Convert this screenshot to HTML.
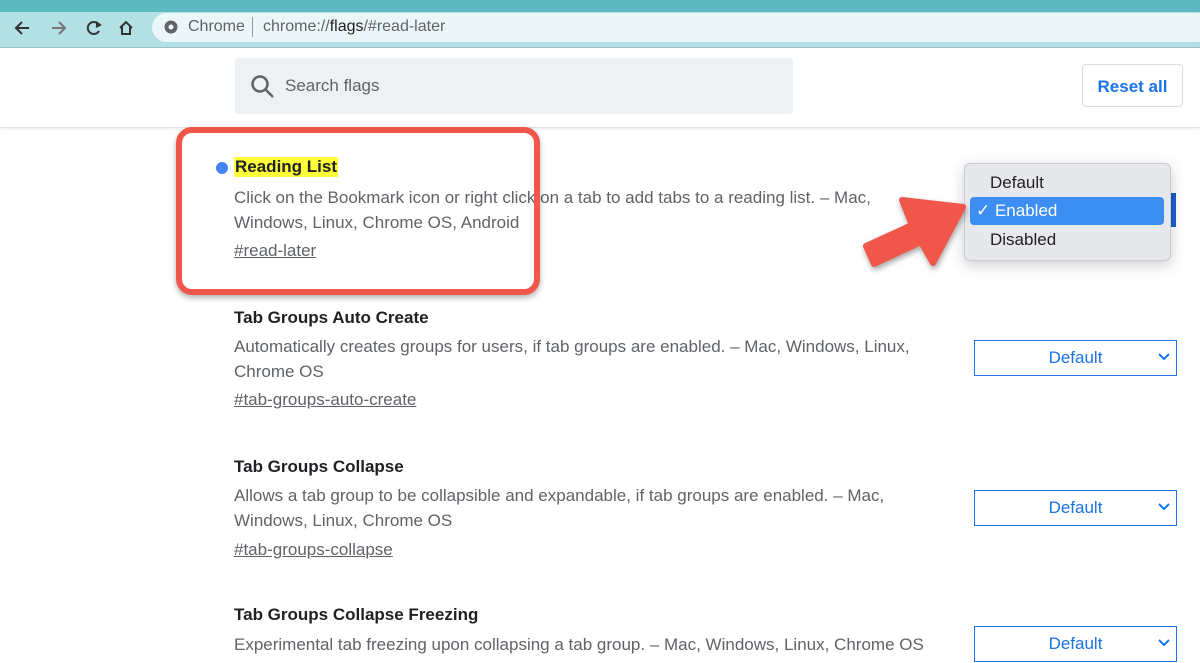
<!DOCTYPE html>
<html><head><style>
body{margin:0;width:1200px;height:663px;overflow:hidden;background:#fff;font-family:"Liberation Sans",Arial,sans-serif;position:relative;color:#202124}
.abs{position:absolute}
.top{left:0;top:0;width:1200px;height:12px;background:#5cb9c1}
.tb{left:0;top:12px;width:1200px;height:35px;background:#b2e0e3;border-bottom:1px solid #9cc4c7}
.pill{left:152px;top:13px;width:1060px;height:29px;border-radius:15px;background:#eaf6f7}
.hdr{left:0;top:48px;width:1200px;height:79px;border-bottom:1px solid #e0e0e0;box-shadow:0 1px 3px rgba(0,0,0,.08)}
.search{left:235px;top:58px;width:558px;height:56px;background:#eef1f3;border-radius:3px}
.reset{left:1082px;top:64px;width:101px;height:43px;border:1px solid #dadce0;border-radius:4px;color:#1a73e8;font-size:17px;font-weight:bold;text-align:center;line-height:43px;box-sizing:border-box;background:#fff}
.t{font-size:17px;font-weight:bold;color:#202124}
.d{font-size:17px;color:#5f6368;line-height:24.5px;width:720px}
.l{font-size:17px;color:#5f6368;text-decoration:underline}
.sel{width:203px;height:36px;border:1px solid #1a73e8;box-sizing:border-box;color:#1a73e8;font-size:17px;text-align:center;line-height:34px;background:#fff}
.sel svg{position:absolute;right:6px;top:12px}
</style></head><body>
<div class="abs top"></div>
<div class="abs tb"></div>
<svg class="abs" style="left:12px;top:18px" width="140" height="20" viewBox="0 0 140 20" fill="none" stroke-width="2">
<path d="M17 10H5M10 4L4 10L10 16" stroke="#333"/>
<path d="M40 10H52M47 4L53 10L47 16" stroke="#777"/>
<path d="M87 7A6 6 0 1 0 87 13" stroke="#333"/><path d="M84 4L88 7L84 9" stroke="#333" fill="#333"/>
<path d="M108 10L114 4L120 10M110 9V16H118V9" stroke="#333"/>
</svg>
<div class="abs pill"></div>
<svg class="abs" style="left:164px;top:20px" width="14" height="14" viewBox="0 0 14 14"><circle cx="7" cy="7" r="6.5" fill="#5f6368"/><circle cx="7" cy="7" r="2.5" fill="#eaf6f7"/></svg>
<div class="abs" style="left:188px;top:18px;font-size:16px;color:#5f6368">Chrome</div>
<div class="abs" style="left:252px;top:17px;width:1px;height:20px;background:#999"></div>
<div class="abs" style="left:263px;top:18px;font-size:16px;color:#5f6368">chrome://<span style="color:#202124">flags</span>/#read-later</div>
<div class="abs hdr"></div>
<div class="abs search"></div>
<svg class="abs" style="left:250px;top:74px" width="26" height="26" viewBox="0 0 26 26" fill="none" stroke="#5f6368" stroke-width="2.5"><circle cx="10" cy="10" r="7.5"/><path d="M15.5 15.5L23 23"/></svg>
<div class="abs" style="left:285px;top:76px;font-size:17px;color:#5f6368">Search flags</div>
<div class="abs reset">Reset all</div>

<div class="abs" style="left:216px;top:162px;width:12px;height:12px;border-radius:50%;background:#4285f4"></div>
<div class="abs t" style="left:234px;top:157px;background:#ffff3a;padding:0 1px">Reading List</div>
<div class="abs d" style="left:234px;top:186px;width:680px">Click on the Bookmark icon or right click on a tab to add tabs to a reading list. – Mac, Windows, Linux, Chrome OS, Android</div>
<div class="abs l" style="left:234px;top:241px">#read-later</div>
<div class="abs" style="left:176px;top:127px;width:364px;height:168px;border:6px solid #f0564a;border-radius:16px;box-sizing:border-box;box-shadow:0 3px 6px rgba(0,0,0,.3)"></div>

<div class="abs" style="left:1168px;top:193px;width:8px;height:34px;background:#1a5fcc"></div>
<div class="abs" style="left:964px;top:163px;width:205px;height:96px;background:#e6e8eb;border:1px solid #c9cbce;border-radius:6px;box-shadow:0 4px 14px rgba(0,0,0,.2)"></div>
<div class="abs" style="left:990px;top:173px;font-size:17px;color:#222">Default</div>
<div class="abs" style="left:970px;top:197px;width:194px;height:28px;background:#3d8ef2;border-radius:4px"></div>
<div class="abs" style="left:976px;top:201px;font-size:17px;color:#fff">✓ Enabled</div>
<div class="abs" style="left:990px;top:230px;font-size:17px;color:#222">Disabled</div>
<svg class="abs" style="left:840px;top:180px" width="140" height="100" viewBox="0 0 140 100"><path d="M26 66L72 45L62 20L123 27L93 83L81 62L34 84Z" fill="#f0564a" stroke="#f0564a" stroke-width="6" stroke-linejoin="round" style="filter:drop-shadow(1px 3px 3px rgba(0,0,0,.35))"/></svg>

<div class="abs t" style="left:234px;top:308px">Tab Groups Auto Create</div>
<div class="abs d" style="left:234px;top:335px">Automatically creates groups for users, if tab groups are enabled. – Mac, Windows, Linux, Chrome OS</div>
<div class="abs l" style="left:234px;top:390px">#tab-groups-auto-create</div>
<div class="abs sel" style="left:974px;top:340px">Default<svg width="12" height="8" viewBox="0 0 12 8" fill="none" stroke="#1a73e8" stroke-width="2"><path d="M1 1L6 6L11 1"/></svg></div>

<div class="abs t" style="left:234px;top:457px">Tab Groups Collapse</div>
<div class="abs d" style="left:234px;top:484px">Allows a tab group to be collapsible and expandable, if tab groups are enabled. – Mac, Windows, Linux, Chrome OS</div>
<div class="abs l" style="left:234px;top:540px">#tab-groups-collapse</div>
<div class="abs sel" style="left:974px;top:490px">Default<svg width="12" height="8" viewBox="0 0 12 8" fill="none" stroke="#1a73e8" stroke-width="2"><path d="M1 1L6 6L11 1"/></svg></div>

<div class="abs t" style="left:234px;top:605px">Tab Groups Collapse Freezing</div>
<div class="abs d" style="left:234px;top:633px;width:760px">Experimental tab freezing upon collapsing a tab group. – Mac, Windows, Linux, Chrome OS</div>
<div class="abs sel" style="left:974px;top:626px">Default<svg width="12" height="8" viewBox="0 0 12 8" fill="none" stroke="#1a73e8" stroke-width="2"><path d="M1 1L6 6L11 1"/></svg></div>
</body></html>
